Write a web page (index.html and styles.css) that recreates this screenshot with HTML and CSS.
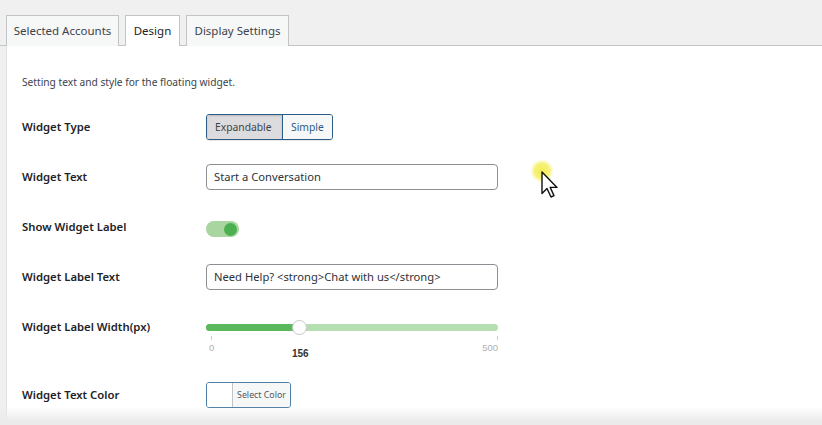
FILE: index.html
```html
<!DOCTYPE html>
<html>
<head>
<meta charset="utf-8">
<link rel="stylesheet" href="styles.css">
</head>
<body>
<div class="page">
  <div class="tabs">
    <div class="tab t1">Selected Accounts</div>
    <div class="tab t2 active">Design</div>
    <div class="tab t3">Display Settings</div>
  </div>
  <div class="panel">
    <p class="desc">Setting text and style for the floating widget.</p>
    <div class="row r-type">
      <div class="label">Widget Type</div>
      <div class="seg"><span class="seg-btn on">Expandable</span><span class="seg-btn">Simple</span></div>
    </div>
    <div class="row">
      <div class="label">Widget Text</div>
      <div class="input">Start a Conversation</div>
    </div>
    <div class="row">
      <div class="label">Show Widget Label</div>
      <div class="toggle"><span class="knob"></span></div>
    </div>
    <div class="row">
      <div class="label">Widget Label Text</div>
      <div class="input">Need Help? &lt;strong&gt;Chat with us&lt;/strong&gt;</div>
    </div>
    <div class="row r-width">
      <div class="label">Widget Label Width(px)</div>
      <div class="slider">
        <div class="track"><div class="fill"></div><div class="thumb"></div></div>
        <div class="ticks"><span class="tick t0">0</span><span class="tick tmax">500</span></div>
        <div class="value">156</div>
      </div>
    </div>
    <div class="row">
      <div class="label">Widget Text Color</div>
      <div class="color"><span class="swatch"></span><span class="ctext">Select Color</span></div>
    </div>
  </div>
  <div class="fade"></div>
  <svg class="cursor" width="40" height="44" viewBox="0 0 40 44">
    <defs>
      <radialGradient id="g" cx="50%" cy="50%" r="50%">
        <stop offset="0" stop-color="#f3ec4e" stop-opacity="1"/>
        <stop offset="0.65" stop-color="#f5ef66" stop-opacity="0.85"/>
        <stop offset="1" stop-color="#fbf7a0" stop-opacity="0"/>
      </radialGradient>
    </defs>
    <circle cx="12" cy="11" r="12" fill="url(#g)"/>
    <path d="M12 12 L12 33.5 L17 28.5 L21 37 L24 35.6 L20.2 27.4 L27 27.4 Z" fill="#ffffff" stroke="#111" stroke-width="1.4" stroke-linejoin="round"/>
  </svg>
</div>
</body>
</html>
```
FILE: styles.css
```css
html, body {
  margin: 0;
  padding: 0;
  background: #f0f0f1;
}
body {
  font-family: "Noto Sans", "Open Sans", sans-serif;
  color: #1d2327;
  width: 822px;
  height: 425px;
  overflow: hidden;
}
.page {
  position: relative;
  width: 822px;
  height: 425px;
  overflow: hidden;
}
.tabs {
  display: flex;
  gap: 6px;
  padding: 15px 0 0 6px;
  height: 30px;
  border-bottom: 1px solid #c3c4c7;
}
.tab {
  height: 31px;
  box-sizing: border-box;
  border: 1px solid #c3c4c7;
  border-bottom: none;
  background: #f6f7f7;
  color: #3c434a;
  font-size: 11.5px;
  line-height: 30px;
  text-align: center;
  white-space: nowrap;
  margin-bottom: -1px;
}
.t1 { width: 113px; }
.t2 { width: 55px; }
.t3 { width: 103px; }
.tab.active {
  background: #ffffff;
  color: #1d2327;
}
.panel {
  margin-left: 6px;
  background: #ffffff;
  border-left: 1px solid #e2e3e5;
  height: 380px;
  padding-left: 15px;
  box-sizing: border-box;
}
.desc {
  margin: 0;
  padding-top: 28px;
  font-size: 10.2px;
  color: #3c434a;
  height: 56px;
  box-sizing: border-box;
  line-height: 16px;
}
.row {
  display: flex;
  align-items: center;
  height: 50px;
}
.label {
  width: 184px;
  font-size: 11.3px;
  font-weight: 600;
  color: #1d2327;
  line-height: 16px;
}
.seg {
  display: flex;
  height: 26px;
  border: 1px solid #2c5b86;
  border-radius: 3px;
  box-sizing: border-box;
  overflow: hidden;
  box-shadow: 0 1px 1px rgba(0,0,0,0.1);
}
.seg-btn {
  font-size: 10.3px;
  line-height: 24px;
  color: #2c5b86;
  padding: 0 8px;
  background: #f6f7f7;
}
.seg-btn.on {
  background: #dcdcde;
  color: #3c434a;
  border-right: 1px solid #2c5b86;
  box-shadow: inset 0 1px 2px rgba(0,0,0,0.15);
  width: 76px;
  box-sizing: border-box;
}
.input {
  width: 292px;
  height: 26px;
  box-sizing: border-box;
  border: 1px solid #8c8f94;
  border-radius: 4px;
  font-size: 11.2px;
  line-height: 24px;
  padding-left: 7px;
  color: #2c3338;
}
.toggle {
  width: 33px;
  height: 16px;
  border-radius: 8px;
  background: #a8d5a0;
  position: relative;
  margin-top: 4px;
}
.knob {
  position: absolute;
  right: 2px;
  top: 1.5px;
  width: 13px;
  height: 13px;
  border-radius: 50%;
  background: #4caf50;
}
.r-width {
  align-items: flex-start;
  height: 68px;
}
.r-width .label { padding-top: 17px; }
.slider {
  position: relative;
  width: 292px;
  padding-top: 22px;
}
.track {
  position: relative;
  height: 7px;
  border-radius: 4px;
  background: #b5dfb0;
}
.fill {
  width: 32%;
  height: 7px;
  border-radius: 4px 0 0 4px;
  background: #5cb85c;
}
.thumb {
  position: absolute;
  left: 86px;
  top: -4px;
  width: 15px;
  height: 15px;
  box-sizing: border-box;
  border-radius: 50%;
  background: #fff;
  border: 1px solid #c8c8c8;
}
.ticks {
  position: relative;
  height: 14px;
  font-family: "Liberation Sans", sans-serif;
  font-size: 9.5px;
  color: #b0b0b0;
}
.tick { position: absolute; top: 11px; line-height: 11px; }
.tick::before {
  content: "";
  position: absolute;
  top: -6px;
  width: 1px;
  height: 4px;
  background: #ccc;
}
.t0 { left: 3px; }
.t0::before { left: 2px; }
.tmax { right: 0; }
.tmax::before { right: 0; }
.value {
  position: absolute;
  left: 86px;
  top: 46px;
  font-family: "Liberation Sans", sans-serif;
  font-size: 10px;
  font-weight: 700;
  color: #333;
}
.color {
  display: flex;
  height: 26px;
  border: 1px solid #4f7fa8;
  border-radius: 3px;
  box-sizing: border-box;
  overflow: hidden;
  width: 85px;
}
.swatch {
  width: 25px;
  border-right: 1px solid #c3c4c7;
  background: #fff;
}
.ctext {
  font-size: 8.8px;
  line-height: 24px;
  color: #50575e;
  background: #f6f7f7;
  flex: 1;
  text-align: center;
}
.fade {
  position: absolute;
  left: 0;
  right: 0;
  bottom: 0;
  height: 18px;
  background: linear-gradient(to bottom, rgba(240,240,241,0), #ebebec 80%);
}
.cursor {
  position: absolute;
  left: 530px;
  top: 160px;
}
```
